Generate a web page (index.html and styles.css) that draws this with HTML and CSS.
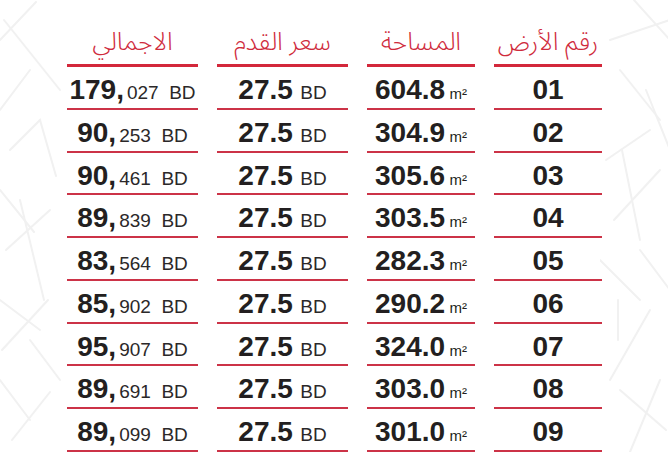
FILE: index.html
```html
<!DOCTYPE html>
<html lang="ar">
<head>
<meta charset="utf-8">
<title>Plots</title>
<link rel="stylesheet" href="styles.css">
</head>
<body>
<div class="page">
  <div class="table" dir="ltr">
    <div class="head"><span dir="rtl">الاجمالي</span></div>
    <div class="head"><span dir="rtl">سعر القدم</span></div>
    <div class="head"><span dir="rtl">المساحة</span></div>
    <div class="head"><span dir="rtl">رقم الأرض</span></div>

    <div class="cell"><span class="big">179,</span><span class="small frac">027&nbsp;&nbsp;BD</span></div>
    <div class="cell"><span class="big">27.5</span> <span class="small cur">BD</span></div>
    <div class="cell"><span class="big">604.8</span> <span class="unit">m²</span></div>
    <div class="cell"><span class="big">01</span></div>

    <div class="cell"><span class="big">90,</span><span class="small frac">253&nbsp;&nbsp;BD</span></div>
    <div class="cell"><span class="big">27.5</span> <span class="small cur">BD</span></div>
    <div class="cell"><span class="big">304.9</span> <span class="unit">m²</span></div>
    <div class="cell"><span class="big">02</span></div>

    <div class="cell"><span class="big">90,</span><span class="small frac">461&nbsp;&nbsp;BD</span></div>
    <div class="cell"><span class="big">27.5</span> <span class="small cur">BD</span></div>
    <div class="cell"><span class="big">305.6</span> <span class="unit">m²</span></div>
    <div class="cell"><span class="big">03</span></div>

    <div class="cell"><span class="big">89,</span><span class="small frac">839&nbsp;&nbsp;BD</span></div>
    <div class="cell"><span class="big">27.5</span> <span class="small cur">BD</span></div>
    <div class="cell"><span class="big">303.5</span> <span class="unit">m²</span></div>
    <div class="cell"><span class="big">04</span></div>

    <div class="cell"><span class="big">83,</span><span class="small frac">564&nbsp;&nbsp;BD</span></div>
    <div class="cell"><span class="big">27.5</span> <span class="small cur">BD</span></div>
    <div class="cell"><span class="big">282.3</span> <span class="unit">m²</span></div>
    <div class="cell"><span class="big">05</span></div>

    <div class="cell"><span class="big">85,</span><span class="small frac">902&nbsp;&nbsp;BD</span></div>
    <div class="cell"><span class="big">27.5</span> <span class="small cur">BD</span></div>
    <div class="cell"><span class="big">290.2</span> <span class="unit">m²</span></div>
    <div class="cell"><span class="big">06</span></div>

    <div class="cell"><span class="big">95,</span><span class="small frac">907&nbsp;&nbsp;BD</span></div>
    <div class="cell"><span class="big">27.5</span> <span class="small cur">BD</span></div>
    <div class="cell"><span class="big">324.0</span> <span class="unit">m²</span></div>
    <div class="cell"><span class="big">07</span></div>

    <div class="cell"><span class="big">89,</span><span class="small frac">691&nbsp;&nbsp;BD</span></div>
    <div class="cell"><span class="big">27.5</span> <span class="small cur">BD</span></div>
    <div class="cell"><span class="big">303.0</span> <span class="unit">m²</span></div>
    <div class="cell"><span class="big">08</span></div>

    <div class="cell"><span class="big">89,</span><span class="small frac">099&nbsp;&nbsp;BD</span></div>
    <div class="cell"><span class="big">27.5</span> <span class="small cur">BD</span></div>
    <div class="cell"><span class="big">301.0</span> <span class="unit">m²</span></div>
    <div class="cell"><span class="big">09</span></div>
  </div>
</div>
</body>
</html>
```

FILE: styles.css
```css
html, body {
  margin: 0;
  padding: 0;
}
body {
  width: 668px;
  height: 452px;
  overflow: hidden;
  background-color: #ffffff;
  background-image:
    url("data:image/svg+xml;utf8,<svg xmlns='http://www.w3.org/2000/svg' width='70' height='452' viewBox='0 0 70 452'><g stroke='%23f1f1f1' stroke-width='2' fill='none' stroke-linecap='round'><path d='M0 40 L36 2'/><path d='M4 20 L60 90'/><path d='M0 110 L30 70'/><path d='M10 150 L40 120 L56 176'/><path d='M0 190 L34 232'/><path d='M6 250 L50 210'/><path d='M20 200 L44 300'/><path d='M0 300 L40 330'/><path d='M2 350 L48 300'/><path d='M0 380 L30 420'/><path d='M12 440 L50 392'/><path d='M30 340 L60 380'/></g></svg>"),
    url("data:image/svg+xml;utf8,<svg xmlns='http://www.w3.org/2000/svg' width='70' height='452' viewBox='0 0 70 452'><g stroke='%23f1f1f1' stroke-width='2' fill='none' stroke-linecap='round'><path d='M34 0 L70 40'/><path d='M10 40 L70 20'/><path d='M20 70 L60 120'/><path d='M46 90 L70 150'/><path d='M6 160 L50 130'/><path d='M22 150 L40 240'/><path d='M60 170 L14 220'/><path d='M0 260 L40 300'/><path d='M40 250 L70 290'/><path d='M18 300 L18 340'/><path d='M50 310 L10 380'/><path d='M20 390 L66 430'/><path d='M60 380 L30 452'/></g></svg>");
  background-repeat: no-repeat, no-repeat;
  background-position: 0 0, 600px 0;
}
.page {
  padding-left: 67px;
}
.table {
  display: grid;
  grid-template-columns: 131px 131px 108px 108px;
  column-gap: 19px;
  grid-template-rows: 67px;
  grid-auto-rows: 42.75px;
}
.head {
  box-sizing: border-box;
  border-bottom: 3px solid #d3283b;
  display: flex;
  align-items: flex-end;
  justify-content: center;
  padding-bottom: 9px;
  font-family: "Noto Sans Arabic", "DejaVu Sans", sans-serif;
  font-weight: 300;
  font-size: 25px;
  line-height: 1;
  color: #cf2b3c;
}
.cell {
  box-sizing: border-box;
  border-bottom: 2px solid #cc3347;
  text-align: center;
  padding-top: 9px;
  font-family: "Liberation Sans", Arial, sans-serif;
  color: #231f20;
  line-height: 28px;
  white-space: nowrap;
}
.big {
  font-size: 28px;
  font-weight: 700;
}
.small {
  font-size: 19px;
  line-height: 1;
  color: #2b2829;
}
.frac {
  margin-left: 3px;
}
.cur {
  margin-left: 3px;
}
.unit {
  font-size: 15px;
  line-height: 1;
}
```
